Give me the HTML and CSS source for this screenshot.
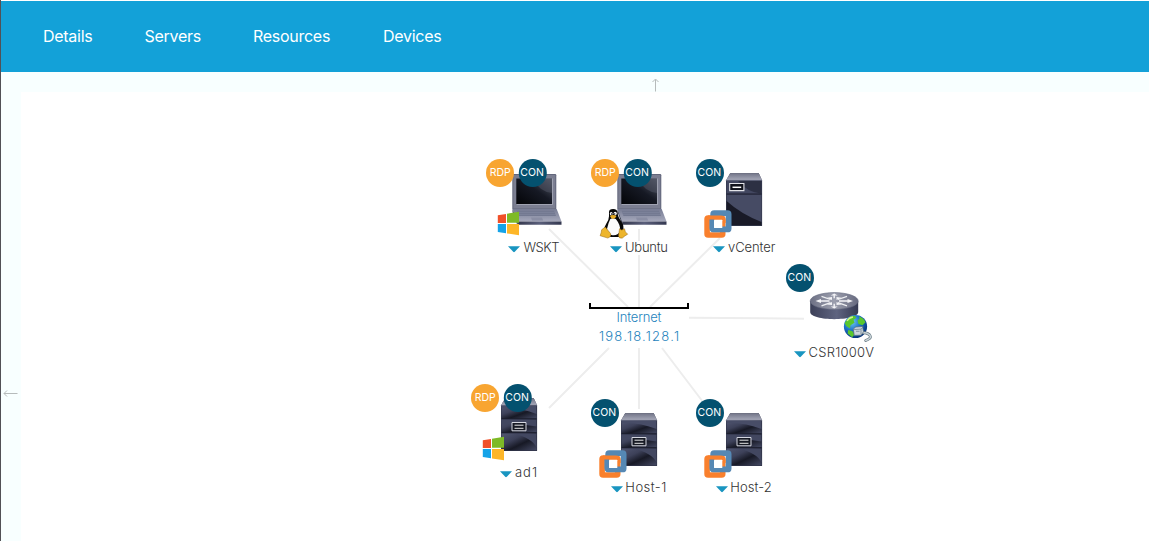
FILE: index.html
```html
<!DOCTYPE html>
<html lang="en">
<head>
<meta charset="utf-8">
<title>Topology</title>
<link rel="stylesheet" href="styles.css">
</head>
<body>
<div class="app">
<nav class="navbar">
  <a class="nav-item details">Details</a>
  <a class="nav-item servers">Servers</a>
  <a class="nav-item resources">Resources</a>
  <a class="nav-item devices">Devices</a>
</nav>
<main class="workspace">
<svg class="topology" viewBox="1 72 1148 469" width="1148" height="469">
  <defs>
    <linearGradient id="face" x1="0" y1="0" x2="1" y2="0"><stop offset="0" stop-color="#34374c"/><stop offset=".5" stop-color="#5a5f7b"/><stop offset="1" stop-color="#343850"/></linearGradient>
    <linearGradient id="drawer" x1="0" y1="0" x2="1" y2="1"><stop offset="0" stop-color="#535873"/><stop offset=".35" stop-color="#3d4159"/><stop offset=".6" stop-color="#171925"/><stop offset="1" stop-color="#444963"/></linearGradient>
    <linearGradient id="lid" x1="0" y1="0" x2="0" y2="1"><stop offset="0" stop-color="#717487"/><stop offset="1" stop-color="#a7a9b9"/></linearGradient>
    <linearGradient id="screen" x1="0" y1="1" x2="1" y2="0"><stop offset="0" stop-color="#030407"/><stop offset=".55" stop-color="#161924"/><stop offset="1" stop-color="#555a69"/></linearGradient>
    <linearGradient id="keys" x1="0" y1="0" x2="0" y2="1"><stop offset="0" stop-color="#777c94"/><stop offset="1" stop-color="#a5a8bb"/></linearGradient>
    <linearGradient id="drum" x1="0" y1="0" x2="1" y2="0"><stop offset="0" stop-color="#3c4058"/><stop offset=".55" stop-color="#5f6480"/><stop offset="1" stop-color="#363a52"/></linearGradient>
    <linearGradient id="drumtop" x1="0" y1="0" x2="1" y2="0"><stop offset="0" stop-color="#6d7084"/><stop offset=".5" stop-color="#9c9fae"/><stop offset="1" stop-color="#66697e"/></linearGradient>
    <radialGradient id="ocean" cx=".35" cy=".3" r=".75"><stop offset="0" stop-color="#70c9f5"/><stop offset=".5" stop-color="#1b70c7"/><stop offset="1" stop-color="#062e73"/></radialGradient>

    <g id="rdp"><circle cx="20" cy="23" r="14" fill="#f8a531"/><text class="badge" x="20.2" y="26" textLength="21" lengthAdjust="spacingAndGlyphs">RDP</text></g>
    <g id="con"><circle cx="20" cy="23" r="14" fill="#04516f"/><text class="badge" x="19.3" y="26" textLength="23.5" lengthAdjust="spacingAndGlyphs">CON</text></g>
    <path id="caret" d="M0 96.3h12l-5.2 5.5q-.8.7-1.6 0z" fill="#1995c0"/>

    <g id="laptop">
      <rect x="32.3" y="24" width="44" height="35.5" rx="1.2" fill="#62667b"/>
      <rect x="33.3" y="25" width="42" height="33.5" fill="#7b7e91"/>
      <rect x="36.3" y="28.5" width="35.8" height="25.7" fill="url(#screen)"/>
      <path d="M52 28.5h20v14.5q-12-1-20-14.5z" fill="#525665" opacity=".5"/>
      <path d="M36.5 54.5H72.6V28.5" fill="none" stroke="#b0b2c0" stroke-width=".8"/>
      <path d="M32.5 59h44.2l4.8 12.5H37.2z" fill="url(#keys)"/>
      <path d="M36.5 60.8H74l2 5.2H38.5z" fill="#737991"/>
      <path d="M37.5 62.5H74.5M38 64.5H75.5" stroke="#858aa1" stroke-width=".5"/>
      <path d="M51 67.5h11l1.2 3H52z" fill="#8a8ea4"/>
      <path d="M32.5 59l4.7 12.5v3.2L32.5 62z" fill="#444a60"/>
      <path d="M37.2 71.5h44.3v3.2H37.2z" fill="url(#face)"/>
    </g>
    <g id="windows">
      <path d="M17.8 65.2l8.2-1.3v9.2h-8.2z" fill="#f15029"/><path d="M27 63.7L39 61.8v11H27z" fill="#7eba27"/>
      <path d="M17.8 74h8.2v9.3l-8.2-1.2z" fill="#15a3e8"/><path d="M27 74h12v11.2l-12-1.8z" fill="#fdb628"/>
    </g>
    <g id="tux">
      <path d="M24 62Q24 59 28.1 59q4.4 0 4.6 4.2 0 3.6 3.7 8.3 3.2 4.2 1.6 11L35 87H21.5q-4.5-7-.4-13 3-4.3 2.9-7.7z" fill="#080808"/>
      <path d="M25.3 69q2.4-1.6 5.5 0 5.3 6.5 4.2 12.2-2 4.5-7.5 4-6-.7-5.4-6.7 1-5.3 3.2-9.5z" fill="#fbfbfb"/>
      <ellipse cx="26.2" cy="63.7" rx="1.4" ry="1.7" fill="#fff"/><ellipse cx="30.2" cy="63.6" rx="1.6" ry="1.8" fill="#fff"/>
      <circle cx="26.6" cy="64" r=".7"/><circle cx="29.7" cy="64" r=".7"/>
      <path d="M25 66q3-2 6.5.1-1.4 3-3.5 3-2 0-3-3.1z" fill="#e8ad25"/>
      <path d="M16.6 79.8l3.6-2.8 5.4 6.6q1.2 3.2-2.7 4.5l-7.8-2.4q1.3-3 1.5-5.9z" fill="#edb52c" stroke="#92661a" stroke-width=".5"/>
      <path d="M34.5 78.7l2.2 1.4 2.8-1.3.9 3.1 2.3 2.3q-3 1.6-5.3 3.8-3.5.8-3.9-2z" fill="#edb52c" stroke="#92661a" stroke-width=".5"/>
    </g>
    <g id="cabinet">
      <path d="M40.2 23.2h28.6l3.3 7.2v45.1q0 .6-1 .6H37q-1 0-1-.8V30.4z" fill="#303449"/>
      <path d="M40.2 23.2h28.6l3.3 7H36z" fill="url(#lid)"/>
      <path d="M36.3 30.4h35.5" stroke="#71768d" stroke-width=".7"/>
    </g>
    <g id="tower">
      <use href="#cabinet"/>
      <path d="M36.6 30.8h34.9V44H36.6z" fill="#424760"/><path d="M48 31h23.5v12.8Q57 42 48 31z" fill="#2c3043"/>
      <path d="M36.6 44.5h34.9v30.7H36.6z" fill="#464b64"/><path d="M36.6 51Q51 64 71.5 72v3.2H36.6z" fill="#11131d" opacity=".86"/>
      <path d="M36.6 44h35" stroke="#1c1f2f"/>
      <path d="M39.7 33.5h14.2v7.1H39.7z" fill="#11131c" stroke="#e2e3e8" stroke-width="1.1"/><path d="M42.5 37.3h8.7" stroke="#fff" stroke-width="1.5"/>
    </g>
    <g id="server">
      <use href="#cabinet"/>
      <path d="M36.6 30.8h34.9v12.7H36.6z" fill="url(#drawer)"/><path d="M36.6 33Q54 32 71.5 39v-8H36.6z" fill="#484d67"/>
      <path d="M36.6 44.3h34.9v13H36.6z" fill="url(#drawer)"/><path d="M36.6 44.5h34.9v7q-17-3-34.9-2z" fill="#424760"/>
      <path d="M36.6 58.2h34.9v17H36.6z" fill="url(#drawer)"/><path d="M48 58.5h23.5v14Q67 63 48 58.5z" fill="#424760"/>
      <path d="M36.6 43.8h35M36.6 57.7h35" stroke="#141723" stroke-width=".8"/>
      <path d="M47 47.5h14v8.3H47z" fill="#161923" stroke="#d6d8e1" stroke-width="1"/><path d="M49.5 50.2h9M49.5 53.3h9" stroke="#fff" stroke-width=".9"/>
    </g>
    <g id="vm">
      <rect x="17.1" y="68" width="15.6" height="17" rx="1" fill="none" stroke="#f9802d" stroke-width="5.6"/>
      <rect x="23.2" y="63.2" width="15.4" height="16.2" rx="1" fill="none" stroke="#5588b4" stroke-width="5.8"/>
      <path d="M18 67.8h12.5q2.8 0 2.8 2.8v2.5" fill="none" stroke="#f9802d" stroke-width="4.8"/>
      <path d="M21.8 69.5v8.4q0 1.8 2 1.8H34" fill="none" stroke="#5588b4" stroke-width="4.8"/>
      <rect x="24" y="69.7" width="8.3" height="8.3" rx=".5" fill="#fff"/>
    </g>
  </defs>

  <g class="links">
    <path d="M549 229l79 78M639 229v12M639 255v52M720 238l-70 69M689 317.7l115 1M609 348l-60 60M639 348v61M662 348l41 54"/>
  </g>
  <path d="M590 303v5h98v-5" fill="none" stroke="#000" stroke-width="2"/>
  <g class="network"><text x="616.5" y="322" textLength="45">Internet</text><text x="599" y="341" textLength="80">198.18.128.1</text></g>

  <g transform="translate(480 150)"><use href="#laptop"/><use href="#rdp"/><use href="#con" x="32.8"/><use href="#windows"/><use href="#caret" x="28"/><text class="label" x="43.5" y="102" textLength="36">WSKT</text></g>
  <g transform="translate(585 150)"><use href="#laptop"/><use href="#rdp"/><use href="#con" x="32.8"/><use href="#tux"/><use href="#caret" x="25"/><text class="label" x="40" y="102" textLength="43">Ubuntu</text></g>
  <g transform="translate(690 150)"><use href="#tower"/><use href="#con"/><use href="#vm"/><use href="#caret" x="23"/><text class="label" x="38" y="102" textLength="47.3">vCenter</text></g>
  <g transform="translate(780 255)">
    <path d="M30.2 46v11c0 9.5 48 9.5 48 0V46z" fill="url(#drum)"/>
    <ellipse cx="54.2" cy="46" rx="24" ry="8.4" fill="url(#drumtop)" stroke="#62667c" stroke-width=".6"/>
    <path d="M50.5 44.5l-9-3.2M58 44.5l9-3.2M50.5 47.7l-9 3.2M58 47.7l9 3.2" stroke="#eeeff2" stroke-width="1.3"/>
    <path d="M35.5 46l5.5-2v1.3h8.5v1.4H41V48zM73 46l-5.5-2v1.3H59v1.4h8.5V48zM47 42.8l5 2.3v-3zM61.5 42.8l-5 2.3v-3zM47 49.4l5-2.3v3zM61.5 49.4l-5-2.3v3zM54.2 38.5l-3.5 2.1h2.8v2.6h1.4v-2.6h2.8zM54.2 53.5l-3.5-2.1h2.8v-2.6h1.4v2.6h2.8z" fill="#f4f4f7"/>
    <circle cx="75.5" cy="71.5" r="11.6" fill="url(#ocean)"/>
    <path d="M67.5 64q3-3.4 7-3.2l2 2-3 2 1 3-4 2.5-.5 3.2-3.8-2.5-1.5-3zM79 61.2q5 2.2 6.5 6l-3 3-4-1.2-1-3.6 2-1.7zM68.2 75l4 1.1 2.4 3.4-2.5 2.8-4.5-3.7z" fill="#59c72d"/>
    <path d="M67 66q2-3.5 6-4" fill="none" stroke="#d5f588" stroke-width="1.3"/>
    <path d="M82 77.5q5 0 7.5 2.3 2.5 3.2-1.6 4.7l-2.2 1" fill="none" stroke="#667983" stroke-width="2.9" stroke-linecap="round"/>
    <path d="M82 77.5q5 0 7.5 2.3 2.5 3.2-1.6 4.7l-2.2 1" fill="none" stroke="#c8d2d7" stroke-width="1.5" stroke-linecap="round"/>
    <path d="M73.3 74l2.5-2 6.7-.5 1 5.2-2.3 3.5-7 .2z" fill="#cbd5dd" stroke="#566b7a" stroke-width=".7"/><path d="M74 74.6l7-.5v5M81 74l2.3-2M76 76.3h3.5" fill="none" stroke="#738592" stroke-width=".8"/>
    <use href="#con"/><use href="#caret" x="14"/><text class="label" x="28.5" y="102" textLength="65.5">CSR1000V</text>
  </g>
  <g transform="translate(465 375)"><use href="#server"/><use href="#rdp"/><use href="#con" x="32.8"/><use href="#windows"/><use href="#caret" x="35"/><text class="label" x="50" y="102" textLength="22">ad1</text></g>
  <g transform="translate(585 390)"><use href="#server"/><use href="#con"/><use href="#vm"/><use href="#caret" x="26"/><text class="label" x="40.3" y="102" textLength="41">Host-1</text></g>
  <g transform="translate(690 390)"><use href="#server"/><use href="#con"/><use href="#vm"/><use href="#caret" x="26"/><text class="label" x="40.3" y="102" textLength="41.5">Host-2</text></g>

  <path class="arrow" d="M655.5 91.5V79.5M652.5 82l3-3 3 3M17.5 393.5H4M7 390.5l-3 3 3 3"/>
</svg>
</main>
</div>
</body>
</html>
```
FILE: styles.css
```css
* { box-sizing: border-box; }
body { margin: 0; background: #fff; font-family: Inter, Roboto, sans-serif; overflow: hidden; }
.app { width: 1149px; height: 541px; padding-top: 1px; border-left: 1px solid #515156; display: flex; flex-direction: column; }
.navbar { height: 71px; flex: none; display: flex; align-items: center; padding: 0 42px 2px; gap: 52px; background: #13a1d8; }
.nav-item { color: #fff; font: 400 16px/22px Inter, sans-serif; letter-spacing: -.28px; white-space: nowrap; }
.details { width: 49.5px; }
.servers { width: 56.5px; }
.resources { width: 78px; }
.devices { width: 60px; }
.workspace { height: 469px; border-top: 20px solid #f8ffff; border-left: 20px solid #f8ffff; }
.topology { display: block; margin: -20px 0 0 -20px; overflow: visible; }
.topology text { font-family: Inter, sans-serif; }
.links path { fill: none; stroke: #ededed; stroke-width: 2; }
.label { font-size: 13px; font-weight: 300; fill: #333; }
.network text { font-size: 13px; font-weight: 300; fill: #2583bd; }
.badge { font-size: 11px; font-weight: 400; fill: #fff; text-anchor: middle; }
.arrow { fill: none; stroke: #b6bbbb; stroke-width: 1; }
```
